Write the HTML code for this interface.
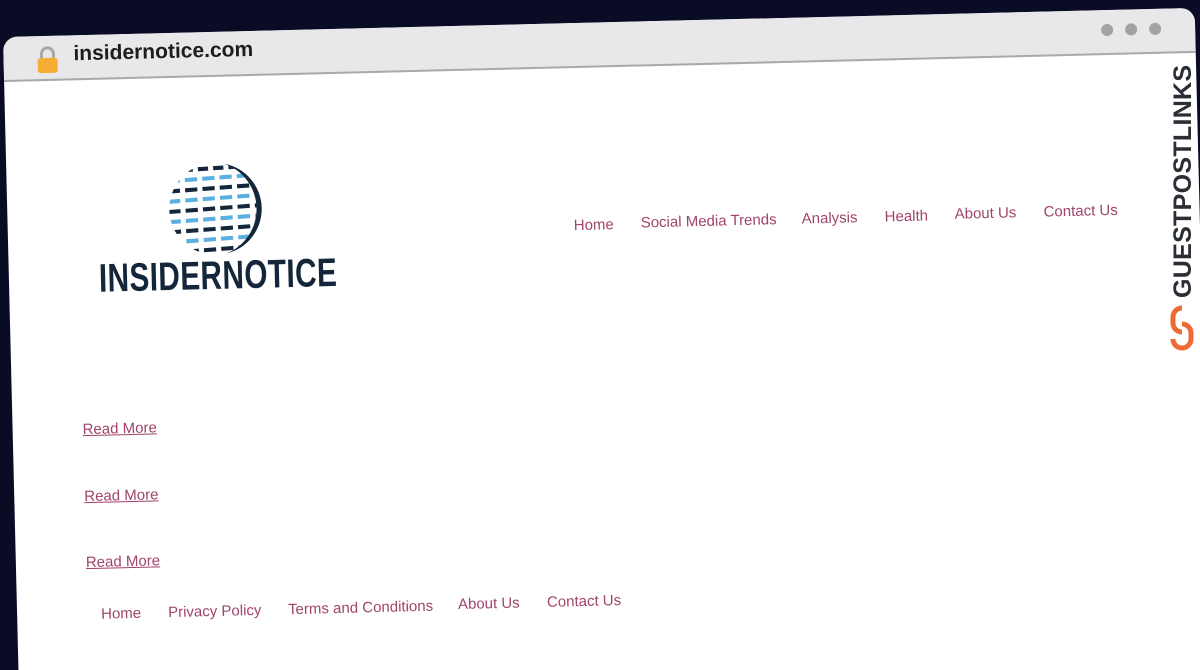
<!DOCTYPE html>
<html><head><meta charset="utf-8"><style>
html,body{margin:0;padding:0;width:1200px;height:670px;overflow:hidden;background:#0a0c26;font-family:"Liberation Sans",sans-serif}
#clip{position:fixed;left:0;top:0;width:1200px;height:670px;overflow:hidden;background:#0a0c26}
#w{position:absolute;left:3px;top:37px;width:1192px;height:720px;background:#fff;border-radius:14px 14px 0 0;transform-origin:0 0;transform:rotate(-1.4deg);overflow:hidden}
#bar{position:absolute;left:0;top:0;width:100%;height:43px;background:#e8e8ea;border-bottom:2px solid #a9a9ab}
.dot{position:absolute;top:14px;width:12px;height:12px;border-radius:50%;background:#a3a3a5}
#url{position:absolute;left:70px;top:7px;font-size:21px;font-weight:bold;color:#1d1d1f}
a{color:#a0446b;font-size:15px;position:absolute;text-decoration:none;white-space:nowrap}
a.u{text-decoration:underline}
#logo{position:absolute;left:90px;top:222px;font-size:40px;font-weight:bold;color:#14263a;transform-origin:0 0;transform:scaleX(0.745);letter-spacing:0.5px}
</style></head><body>
<div id="clip">
<div id="w">
 <div id="bar">
  <svg style="position:absolute;left:32px;top:10px" width="24" height="28" viewBox="0 0 24 28"><path d="M6 12V8a6 6 0 0 1 12 0v4" fill="none" stroke="#a8a8aa" stroke-width="3"/><rect x="2" y="12" width="20" height="15" rx="3" fill="#f7ac33"/></svg>
  <div id="url">insidernotice.com</div>
  <div class="dot" style="left:1098px"></div><div class="dot" style="left:1122px"></div><div class="dot" style="left:1146px"></div>
 </div>
 <svg style="position:absolute;left:161px;top:128px" width="98" height="98" viewBox="0 0 96 96">
  <defs><clipPath id="c"><circle cx="46" cy="48" r="45"/></clipPath></defs>
  <g clip-path="url(#c)">
   <g stroke-width="4">
    <line x1="0" y1="10" x2="96" y2="6" stroke="#14263a" stroke-dasharray="10 5"/>
    <line x1="0" y1="20" x2="96" y2="15" stroke="#5aaee0" stroke-dasharray="12 5"/>
    <line x1="0" y1="30" x2="96" y2="25" stroke="#14263a" stroke-dasharray="12 5"/>
    <line x1="0" y1="40" x2="96" y2="35" stroke="#5aaee0" stroke-dasharray="12 5"/>
    <line x1="0" y1="50" x2="96" y2="45" stroke="#14263a" stroke-dasharray="12 5"/>
    <line x1="0" y1="60" x2="96" y2="55" stroke="#5aaee0" stroke-dasharray="12 5"/>
    <line x1="0" y1="70" x2="96" y2="65" stroke="#14263a" stroke-dasharray="12 5"/>
    <line x1="0" y1="80" x2="96" y2="75" stroke="#5aaee0" stroke-dasharray="12 5"/>
    <line x1="0" y1="90" x2="96" y2="85" stroke="#14263a" stroke-dasharray="12 5"/>
   </g>
  </g>
  <path d="M56 4a45 45 0 0 1 0 88a47 47 0 0 0 0-88z" fill="#14263a"/>
 </svg>
 <div id="logo">INSIDERNOTICE</div>
 <a style="left:566px;top:194px">Home</a>
 <a style="left:633px;top:193px">Social Media Trends</a>
 <a style="left:794px;top:193px">Analysis</a>
 <a style="left:877px;top:193px">Health</a>
 <a style="left:947px;top:192px">About Us</a>
 <a style="left:1036px;top:192px">Contact Us</a>
 <a class="u" style="left:70px;top:386px">Read More</a>
 <a class="u" style="left:70px;top:453px">Read More</a>
 <a class="u" style="left:70px;top:519px">Read More</a>
 <a style="left:84px;top:571px">Home</a>
 <a style="left:151px;top:571px">Privacy Policy</a>
 <a style="left:271px;top:571px">Terms and Conditions</a>
 <a style="left:441px;top:570px">About Us</a>
 <a style="left:530px;top:570px">Contact Us</a>
</div>
<div style="position:absolute;left:1169px;top:298px;width:240px;height:28px;transform-origin:0 0;transform:rotate(-90deg);font-size:25px;font-weight:bold;color:#2a2e35;line-height:28px;letter-spacing:0.3px">GUESTPOSTLINKS</div>
<svg style="position:absolute;left:1169px;top:304px" width="26" height="48" viewBox="0 0 26 48"><path d="M13 4a9 9 0 0 0-9 9v6a9 9 0 0 0 9 9M13 20a9 9 0 0 1 9 9v6a9 9 0 0 1-18 0" fill="none" stroke="#f06a35" stroke-width="5"/></svg>
</div>
</body></html>
